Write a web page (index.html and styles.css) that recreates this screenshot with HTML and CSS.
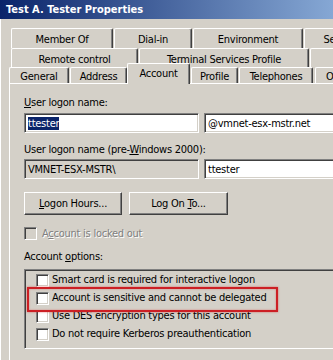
FILE: index.html
```html
<!DOCTYPE html>
<html lang="en">
<head>
    <meta charset="UTF-8">
    <title>Test A. Tester Properties</title>
    <link rel="stylesheet" href="styles.css">
</head>
<body>
    <div class="window">
        <div class="titlebar">
            <span class="title">Test A. Tester Properties</span>
        </div>

        <div class="frame">
            <!-- back rows of the tab strip -->
            <div class="tab-row row-1">
                <div class="tab w-member">Member Of</div>
                <div class="tab w-dialin">Dial-in</div>
                <div class="tab w-env">Environment</div>
                <div class="tab w-sessions">Sessions</div>
            </div>
            <div class="tab-row row-2">
                <div class="tab w-remote">Remote control</div>
                <div class="tab w-tsprofile">Terminal Services Profile</div>
                <div class="tab w-com">COM+</div>
            </div>
            <div class="tab-row row-3">
                <div class="tab w-general">General</div>
                <div class="tab w-address">Address</div>
                <div class="tab tab-active w-account">Account</div>
                <div class="tab w-profile">Profile</div>
                <div class="tab w-phones">Telephones</div>
                <div class="tab w-org">Organization</div>
            </div>

            <div class="panel">
                <div class="label label-first"><u>U</u>ser logon name:</div>
                <div class="field-row">
                    <div class="textbox textbox-left"><span class="selected">ttester</span></div>
                    <div class="textbox textbox-right">@vmnet-esx-mstr.net</div>
                </div>

                <div class="label label-second">User logon name (pre-<u>W</u>indows 2000):</div>
                <div class="field-row field-row-second">
                    <div class="textbox textbox-left textbox-disabled">VMNET-ESX-MSTR\</div>
                    <div class="textbox textbox-right">ttester</div>
                </div>

                <div class="button-row">
                    <button class="btn btn-hours"><u>L</u>ogon Hours...</button>
                    <button class="btn btn-logon">Log On <u>T</u>o...</button>
                </div>

                <div class="check-line check-disabled">
                    <span class="checkbox"></span>
                    <span class="check-text">A<u>c</u>count is locked out</span>
                </div>

                <div class="label label-options">Account <u>o</u>ptions:</div>
                <div class="option-list">
                    <div class="check-line option">
                        <span class="checkbox"></span>
                        <span class="check-text">Smart card is required for interactive logon</span>
                    </div>
                    <div class="check-line option">
                        <span class="checkbox"></span>
                        <span class="check-text">Account is sensitive and cannot be delegated</span>
                    </div>
                    <div class="check-line option">
                        <span class="checkbox"></span>
                        <span class="check-text">Use DES encryption types for this account</span>
                    </div>
                    <div class="check-line option">
                        <span class="checkbox"></span>
                        <span class="check-text">Do not require Kerberos preauthentication</span>
                    </div>
                    <div class="highlight-box"></div>
                </div>
            </div>
        </div>
    </div>
</body>
</html>
```

FILE: styles.css
```css
:root {
    --face: #d4d0c8;
    --shadow: #808080;
    --dark: #404040;
    --light: #ffffff;
    --navy: #0a246a;
}

body {
    margin: 0;
    background: var(--face);
    overflow: hidden;
    font-family: 'DejaVu Sans Condensed', 'Liberation Sans', sans-serif;
    font-size: 11px;
    line-height: 13px;
    letter-spacing: -0.25px;
    color: #000;
}

.window {
    width: 420px;
    height: 360px;
}

/* title bar */
.titlebar {
    height: 19px;
    background: linear-gradient(to right, var(--navy), #a6caf0);
    display: flex;
    align-items: center;
    padding-left: 6px;
}

.title {
    color: #fff;
    font-weight: bold;
    font-size: 11px;
    letter-spacing: 0;
}

.frame {
    border-left: 1px solid var(--light);
    padding-top: 9px;
    height: 332px;
}

/* tabs */
.tab-row {
    display: flex;
    gap: 1px;
}

.row-1,
.row-2 {
    margin-left: 10px;
}

.row-1 { height: 20px; }
.row-2 { height: 19px; }

.row-3 {
    margin-left: 8px;
    height: 16px;
    align-items: flex-end;
}

.tab {
    box-sizing: border-box;
    flex: none;
    height: 100%;
    border-top: 1px solid var(--light);
    border-left: 1px solid var(--light);
    border-right: 1px solid var(--dark);
    border-radius: 2px 2px 0 0;
    box-shadow: inset -1px 0 var(--shadow);
    padding-top: 4px;
    text-align: center;
    white-space: nowrap;
    overflow: hidden;
}

.row-3 .tab {
    padding-top: 2px;
}

.row-3 .tab-active {
    position: relative;
    z-index: 1;
    height: 21px;
    margin-bottom: -1px;
    margin-left: -1px;
    padding-top: 3px;
    background: var(--face);
}

.w-member { width: 102px; }
.w-dialin { width: 78px; }
.w-env { width: 110px; }
.w-sessions { width: 80px; }
.w-remote { width: 127px; }
.w-tsprofile { width: 170px; }
.w-com { width: 90px; }
.w-general { width: 60px; }
.w-address { width: 57px; }
.w-account { width: 63px; }
.w-profile { width: 47px; }
.w-phones { width: 74px; }
.w-org { width: 82px; margin-left: 1px; }

/* tab page */
.panel {
    margin-left: 8px;
    border-top: 1px solid var(--light);
    border-left: 1px solid var(--light);
    padding: 12px 0 0 14px;
    height: 280px;
}

.label-second { margin-top: 10px; }
.label-options { margin-top: 10px; }

.field-row {
    display: flex;
    gap: 5px;
    margin-top: 4px;
}

.field-row-second { margin-top: 3px; }

.textbox {
    box-sizing: border-box;
    height: 20px;
    background: #fff;
    border-top: 1px solid var(--shadow);
    border-left: 1px solid var(--shadow);
    border-bottom: 1px solid var(--light);
    border-right: 1px solid var(--light);
    box-shadow: inset 1px 1px var(--dark), inset -1px -1px var(--face);
    padding: 3px 0 0 3px;
    white-space: nowrap;
    overflow: hidden;
}

.textbox-left { width: 175px; }
.textbox-right { width: 200px; }

.textbox-disabled {
    background: var(--face);
}

.selected {
    background: var(--navy);
    color: #fff;
}

/* buttons */
.button-row {
    display: flex;
    gap: 7px;
    margin-top: 13px;
}

.btn {
    box-sizing: border-box;
    height: 23px;
    margin: 0;
    padding: 0;
    background: var(--face);
    font: inherit;
    letter-spacing: inherit;
    color: #000;
    border-top: 1px solid var(--light);
    border-left: 1px solid var(--light);
    border-right: 1px solid var(--dark);
    border-bottom: 1px solid var(--dark);
    box-shadow: inset -1px -1px var(--shadow);
}

.btn-hours { width: 98px; }
.btn-logon { width: 99px; }

/* checkboxes */
.check-line {
    display: flex;
    align-items: center;
    gap: 5px;
    height: 13px;
    margin-top: 12px;
}

.checkbox {
    box-sizing: border-box;
    flex: none;
    width: 13px;
    height: 13px;
    background: #fff;
    border-top: 1px solid var(--shadow);
    border-left: 1px solid var(--shadow);
    border-bottom: 1px solid var(--light);
    border-right: 1px solid var(--light);
    box-shadow: inset 1px 1px var(--dark), inset -1px -1px var(--face);
}

.check-disabled .checkbox {
    background: var(--face);
}

.check-disabled .check-text {
    color: var(--shadow);
    text-shadow: 1px 1px var(--light);
}

.option-list {
    position: relative;
    box-sizing: border-box;
    width: 330px;
    height: 80px;
    margin-top: 6px;
    padding: 4px 0 0 11px;
    border-top: 1px solid var(--shadow);
    border-left: 1px solid var(--shadow);
    border-bottom: 1px solid var(--light);
    box-shadow: inset 1px 1px var(--dark), inset 0 -1px var(--face);
}

.option {
    height: 18px;
    margin-top: 0;
    align-items: flex-start;
    gap: 3px;
}

.option .check-text {
    margin-top: -1px;
}

/* red annotation drawn over the second option */
.highlight-box {
    position: absolute;
    left: 2px;
    top: 17px;
    width: 251px;
    height: 25px;
    box-sizing: border-box;
    border: 2px solid #cc1f24;
    box-shadow: 0 0 2px rgba(220, 40, 40, 0.6), inset 0 0 2px rgba(220, 40, 40, 0.5);
}
```
